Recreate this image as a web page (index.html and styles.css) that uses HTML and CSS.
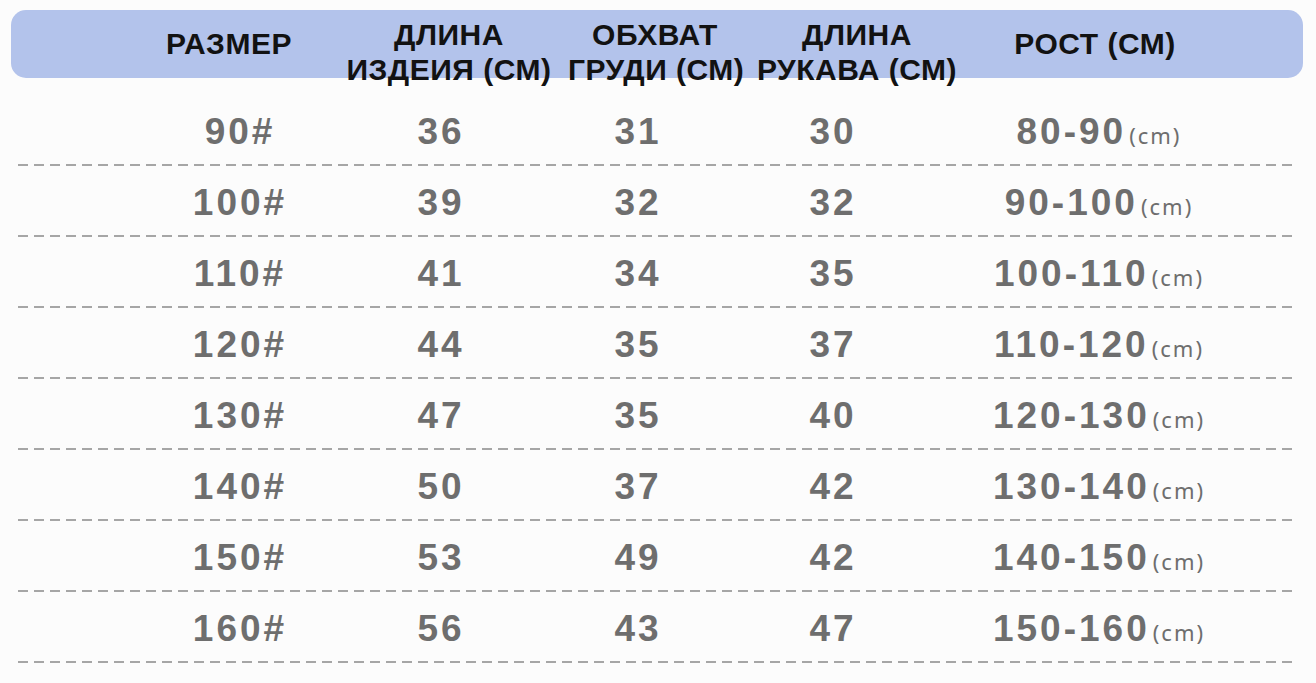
FILE: index.html
```html
<!DOCTYPE html>
<html lang="ru">
<head>
<meta charset="utf-8">
<title>Размеры</title>
<link rel="stylesheet" href="styles.css">
</head>
<body>
<div class="page">
  <div class="head">
    <div class="hcell single">РАЗМЕР</div>
    <div class="hcell">ДЛИНА<br>ИЗДЕИЯ (СМ)</div>
    <div class="hcell">ОБХВАТ<br>ГРУДИ (СМ)</div>
    <div class="hcell">ДЛИНА<br>РУКАВА (СМ)</div>
    <div class="hcell single">РОСТ (СМ)</div>
  </div>
  <div class="rows">
    <div class="row"><div>90#</div><div>36</div><div>31</div><div>30</div><div>80-90<span class="u">(cm)</span></div></div>
    <div class="row"><div>100#</div><div>39</div><div>32</div><div>32</div><div>90-100<span class="u">(cm)</span></div></div>
    <div class="row"><div>110#</div><div>41</div><div>34</div><div>35</div><div>100-110<span class="u">(cm)</span></div></div>
    <div class="row"><div>120#</div><div>44</div><div>35</div><div>37</div><div>110-120<span class="u">(cm)</span></div></div>
    <div class="row"><div>130#</div><div>47</div><div>35</div><div>40</div><div>120-130<span class="u">(cm)</span></div></div>
    <div class="row"><div>140#</div><div>50</div><div>37</div><div>42</div><div>130-140<span class="u">(cm)</span></div></div>
    <div class="row"><div>150#</div><div>53</div><div>49</div><div>42</div><div>140-150<span class="u">(cm)</span></div></div>
    <div class="row"><div>160#</div><div>56</div><div>43</div><div>47</div><div>150-160<span class="u">(cm)</span></div></div>
  </div>
</div>
</body>
</html>
```
FILE: styles.css
```css
html, body {
  margin: 0;
  padding: 0;
  background: #fcfcfc;
}
.page {
  width: 1316px;
  height: 683px;
  overflow: hidden;
  padding-top: 10px;
  box-sizing: border-box;
}
.head {
  margin: 0 13px 0 11px;
  height: 68px;
  background: #b3c3eb;
  border-radius: 15px;
  display: grid;
  grid-template-columns: 202px 238px 174px 230px 246px;
  padding-left: 117px;
  font-family: "Liberation Sans", Arial, sans-serif;
  font-weight: bold;
  font-size: 30px;
  letter-spacing: 0.5px;
  line-height: 35px;
  color: #121212;
  box-sizing: border-box;
}
.hcell {
  text-align: center;
  padding-top: 7px;
  white-space: nowrap;
}
.hcell.single {
  padding-top: 16px;
}
.rows {
  margin: 17px 19px 0 18px;
}
.row {
  height: 71px;
  display: grid;
  grid-template-columns: 208px 194px 200px 190px 342px;
  padding-left: 118px;
  font-family: "Liberation Sans", Arial, sans-serif;
  font-weight: bold;
  font-size: 37px;
  letter-spacing: 3px;
  color: #6e6e6e;
  text-align: center;
  background-image: linear-gradient(to right, #a6a6a6 10px, transparent 10px);
  background-size: 16px 2px;
  background-repeat: repeat-x;
  background-position: 0 bottom;
}
.row > div {
  padding-top: 3px;
  line-height: 68px;
}
.u {
  font-family: "Noto Sans", "DejaVu Sans", sans-serif;
  font-weight: normal;
  font-size: 22px;
  letter-spacing: 2px;
  margin-left: 3px;
  color: #6e6e6e;
}
```
